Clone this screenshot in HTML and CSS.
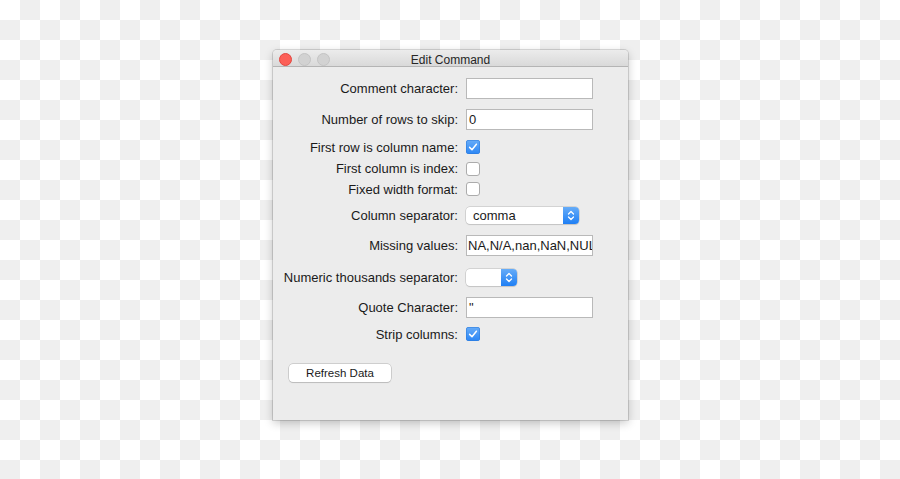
FILE: index.html
```html
<!DOCTYPE html>
<html>
<head>
<meta charset="utf-8">
<title>Edit Command</title>
<link rel="stylesheet" href="styles.css">
</head>
<body>
<div class="window">
  <div class="titlebar">
    <div class="lights">
      <span class="light close"></span>
      <span class="light"></span>
      <span class="light"></span>
    </div>
    <div class="title">Edit Command</div>
    <div></div>
  </div>
  <div class="content">
    <div class="form">
      <div class="lbl">Comment character:</div>
      <div class="ctl"><div class="field"></div></div>

      <div class="lbl">Number of rows to skip:</div>
      <div class="ctl"><div class="field">0</div></div>

      <div class="lbl">First row is column name:</div>
      <div class="ctl"><span class="check on"><svg viewBox="0 0 14 14" width="14" height="14"><path d="M3.6 7.4 L6 9.8 L10.4 4.2" fill="none" stroke="#fff" stroke-width="1.5" stroke-linecap="round" stroke-linejoin="round"/></svg></span></div>

      <div class="lbl">First column is index:</div>
      <div class="ctl"><span class="check"></span></div>

      <div class="lbl">Fixed width format:</div>
      <div class="ctl"><span class="check"></span></div>

      <div class="lbl">Column separator:</div>
      <div class="ctl"><div class="select wide"><span class="sel-text">comma</span><span class="sel-arrow"><svg viewBox="0 0 16 17" width="16" height="17"><path d="M5.5 7 L8 4.5 L10.5 7 M5.5 10 L8 12.5 L10.5 10" fill="none" stroke="#fff" stroke-width="1.3" stroke-linecap="round" stroke-linejoin="round"/></svg></span></div></div>

      <div class="lbl">Missing values:</div>
      <div class="ctl"><div class="field clip">NA,N/A,nan,NaN,NULL,null</div></div>

      <div class="lbl">Numeric thousands separator:</div>
      <div class="ctl"><div class="select narrow"><span class="sel-text"></span><span class="sel-arrow"><svg viewBox="0 0 16 17" width="16" height="17"><path d="M5.5 7 L8 4.5 L10.5 7 M5.5 10 L8 12.5 L10.5 10" fill="none" stroke="#fff" stroke-width="1.3" stroke-linecap="round" stroke-linejoin="round"/></svg></span></div></div>

      <div class="lbl">Quote Character:</div>
      <div class="ctl"><div class="field">"</div></div>

      <div class="lbl">Strip columns:</div>
      <div class="ctl"><span class="check on"><svg viewBox="0 0 14 14" width="14" height="14"><path d="M3.6 7.4 L6 9.8 L10.4 4.2" fill="none" stroke="#fff" stroke-width="1.5" stroke-linecap="round" stroke-linejoin="round"/></svg></span></div>
    </div>
    <div class="actions">
      <button class="btn">Refresh Data</button>
    </div>
  </div>
</div>
</body>
</html>
```

FILE: styles.css
```css
html, body {
  margin: 0;
  padding: 0;
}
body {
  width: 900px;
  height: 479px;
  overflow: hidden;
  background: repeating-conic-gradient(#efefef 0 25%, #ffffff 0 50%) 0 0 / 40px 40px;
  font-family: "Liberation Sans", Arial, sans-serif;
  color: #1a1a1a;
  padding-top: 50px;
  box-sizing: border-box;
}
.window {
  margin-left: 273px;
  width: 355px;
  height: 370px;
  background: #ececec;
  box-shadow: 0 0 0 1px rgba(0, 0, 0, 0.13), 0 3px 10px rgba(0, 0, 0, 0.22);
  border-radius: 4px 4px 0 0;
  display: flex;
  flex-direction: column;
}
.titlebar {
  height: 16px;
  border-bottom: 1px solid #b4b4b4;
  background: linear-gradient(#ececec, #d9d9d9);
  border-radius: 4px 4px 0 0;
  display: grid;
  grid-template-columns: 1fr auto 1fr;
  align-items: center;
}
.lights {
  display: flex;
  gap: 6px;
  padding-left: 6px;
  padding-top: 1px;
  align-items: center;
}
.light {
  width: 11px;
  height: 11px;
  border-radius: 50%;
  background: #d2d2d2;
  border: 0.5px solid #c4c4c4;
}
.light.close {
  background: #fc5f57;
  border-color: #e2463f;
}
.title {
  font-size: 12px;
  color: #262626;
  line-height: 16px;
  padding-top: 2px;
}
.content {
  padding-top: 6px;
}
.form {
  display: grid;
  grid-template-columns: 185px auto;
  column-gap: 8px;
  grid-template-rows: 30px 32px 24px 19px 22px 31px 29px 34px 26px 28px;
  align-items: center;
}
.lbl {
  font-size: 13px;
  text-align: right;
  white-space: nowrap;
}
.ctl {
  display: flex;
  align-items: center;
}
.field {
  box-sizing: border-box;
  width: 127px;
  height: 21px;
  background: #fff;
  border: 1px solid #b9b9b9;
  font-size: 13px;
  line-height: 19px;
  padding-left: 2px;
  white-space: nowrap;
  overflow: hidden;
}
.field.clip {
  padding-left: 1px;
}
.check {
  box-sizing: border-box;
  width: 14px;
  height: 14px;
  border-radius: 3px;
  background: #fff;
  border: 1px solid #acacac;
  display: flex;
}
.check.on {
  border: none;
  background: linear-gradient(#67acf8, #2b86f5);
  box-shadow: inset 0 0 0 0.5px #2a78d8;
}
.select {
  box-sizing: border-box;
  height: 17px;
  background: #fff;
  border-radius: 4px;
  box-shadow: 0 0 0 0.5px #b9b9b9, 0 1px 1px rgba(0, 0, 0, 0.12);
  display: flex;
  align-items: stretch;
  overflow: hidden;
}
.select.wide { width: 113px; }
.select.narrow { width: 51px; }
.sel-text {
  flex: 1;
  font-size: 13px;
  line-height: 17px;
  padding-left: 7px;
}
.sel-arrow {
  width: 16px;
  background: linear-gradient(#66acf8, #1f7ff4);
  display: flex;
}
.actions {
  padding-top: 15px;
  padding-left: 16px;
}
.btn {
  box-sizing: border-box;
  width: 102px;
  height: 18px;
  margin: 0;
  padding: 0;
  background: #fff;
  border: none;
  border-radius: 4px;
  box-shadow: 0 0 0 0.5px #b0b0b0, 0 1px 1px rgba(0, 0, 0, 0.15);
  font-family: "Liberation Sans", Arial, sans-serif;
  font-size: 11.5px;
  color: #1a1a1a;
  line-height: 18px;
}
```
